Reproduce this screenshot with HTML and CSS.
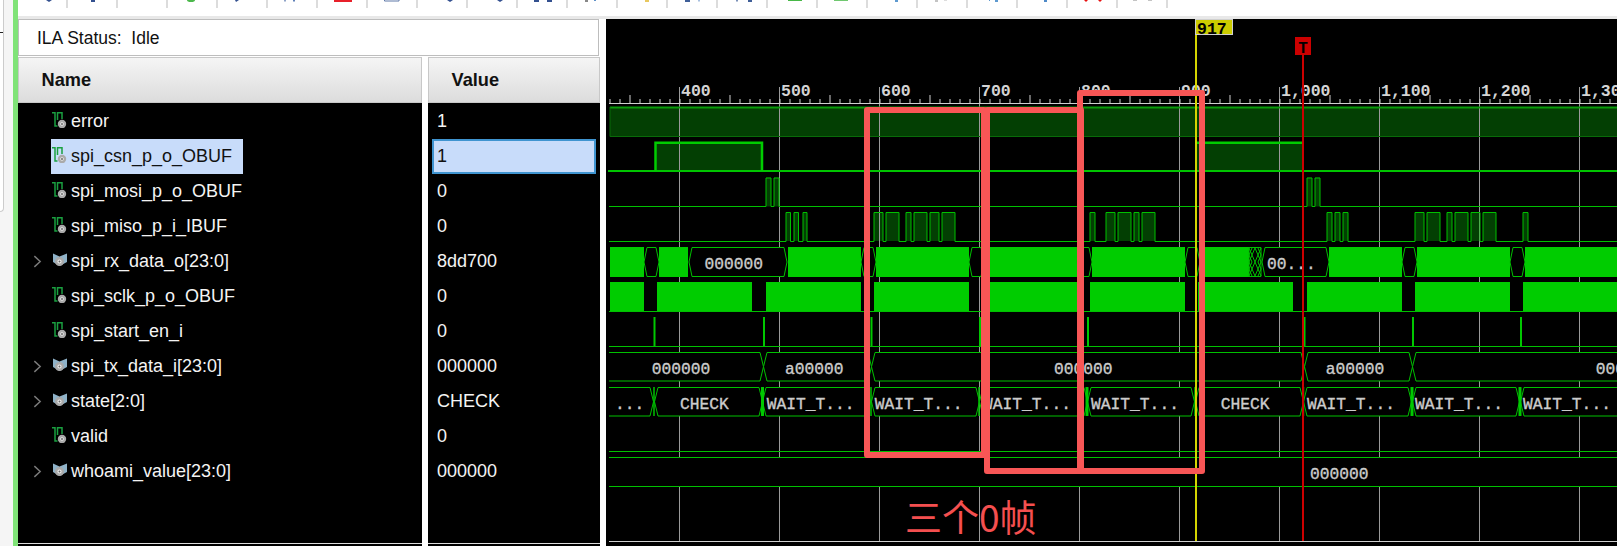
FILE: index.html
```html
<!DOCTYPE html>
<html lang="en">
<head>
<meta charset="utf-8">
<title>ILA Waveform</title>
<link rel="stylesheet" href="styles.css">
</head>
<body>
<svg class="defs" width="0" height="0" aria-hidden="true">
  <defs>
    <symbol id="ic-bit" viewBox="0 0 16 16">
      <path d="M0 0.800H3V14H5.500M5.500 8V0.800H10V7" fill="none" stroke="#1aa040" stroke-width="1.500"/>
      <circle cx="10" cy="12" r="3" fill="#f0f0f0" stroke="#aaaaaa" stroke-width="2.400"/>
      <circle cx="10" cy="12" r="1" fill="#6a6a6a"/>
    </symbol>
    <symbol id="ic-bus" viewBox="0 0 16 16">
      <path d="M1 1.500L7.500 4.500L15 1.500V10L7.500 14L1 10Z" fill="#8fb2c8"/>
      <circle cx="7.500" cy="9.500" r="3.300" fill="#f0f0f0" stroke="#aaaaaa" stroke-width="2.400"/>
      <circle cx="7.500" cy="9.500" r="1" fill="#6a6a6a"/>
    </symbol>
    <symbol id="ic-chev" viewBox="0 0 10 14">
      <path d="M1.500 1L8 7L1.500 13" fill="none" stroke="#7a7a7a" stroke-width="1.600"/>
    </symbol>
    <pattern id="ticks" x="579.500" y="95" width="100" height="8" patternUnits="userSpaceOnUse">
      <path d="M0.500 4V8M10.500 4V8M20.500 4V8M30.500 4V8M40.500 4V8M50.500 0V8M60.500 4V8M70.500 4V8M80.500 4V8M90.500 4V8" stroke="#cfcfcf" fill="none"/>
    </pattern>
  </defs>
</svg>

<div class="app">
  <div class="edge"><div class="sliver"><span class="tick"></span></div></div>
  <div class="green-bar"></div>
  <div class="content">
    <div class="toolbar">
      <div class="tool first"><svg viewBox="0 0 48 3"><path d="M28 0h6l-3 2z" fill="#33508f"/></svg></div>
      <div class="tool"><svg viewBox="0 0 48 3"><rect x="23" width="4" height="2" fill="#33508f"/></svg></div>
      <div class="tool"></div>
      <div class="tool"><svg viewBox="0 0 48 3"><path d="M19 0h8a4 2 0 0 1-8 0z" fill="#4cb84c"/></svg></div>
      <div class="tool"><svg viewBox="0 0 48 3"><path d="M17 0h4l-3 2z" fill="#33508f"/></svg></div>
      <div class="tool"><svg viewBox="0 0 48 3"><rect x="16" width="2" height="1.500" fill="#8fa3c8"/><rect x="25" width="2" height="1.500" fill="#5f80b8"/></svg></div>
      <div class="tool"><svg viewBox="0 0 48 3"><rect x="16" width="18" height="2" fill="#e8202a"/></svg></div>
      <div class="tool"><svg viewBox="0 0 48 3"><path d="M16.500 0V1H31V0" fill="none" stroke="#5f78a8"/></svg></div>
      <div class="tool"><svg viewBox="0 0 48 3"><path d="M29 0h6l-3 2z" fill="#33508f"/></svg></div>
      <div class="tool"><svg viewBox="0 0 48 3"><path d="M29 0h6l-3 2z" fill="#33508f"/></svg></div>
      <div class="tool"><svg viewBox="0 0 48 3"><rect x="16" width="5" height="2" fill="#33508f"/><rect x="29" width="5" height="2" fill="#33508f"/></svg></div>
      <div class="tool"><svg viewBox="0 0 48 3"><rect x="17" width="3" height="2" fill="#888"/><rect x="26" width="2" height="1" fill="#5f90c8"/></svg></div>
      <div class="tool"><svg viewBox="0 0 48 3"><rect x="27" width="4" height="2" fill="#e8c860"/></svg></div>
      <div class="tool"><svg viewBox="0 0 48 3"><rect x="17" width="5" height="2" fill="#3f5f98"/><rect x="30" width="2" height="1.500" fill="#a8c0e0"/></svg></div>
      <div class="tool"><svg viewBox="0 0 48 3"><rect x="18" width="2" height="1.500" fill="#7a90b8"/><rect x="30" width="4" height="2" fill="#3f5f98"/></svg></div>
      <div class="tool"><svg viewBox="0 0 48 3"><rect x="20" width="14" height="1" fill="#48b848"/></svg></div>
      <div class="tool"><svg viewBox="0 0 48 3"><rect x="16" width="14" height="1" fill="#70c870"/></svg></div>
      <div class="tool"><svg viewBox="0 0 48 3"><rect x="27" width="3" height="2" fill="#5f9ad0"/></svg></div>
      <div class="tool"><svg viewBox="0 0 48 3"><rect x="17" width="3" height="2" fill="#c4c4c4"/><rect x="26" width="3" height="1" fill="#ddd"/></svg></div>
      <div class="tool"><svg viewBox="0 0 48 3"><rect x="21" width="1" height="1" fill="#5f9ad0"/><rect x="27" width="3" height="2" fill="#5f9ad0"/></svg></div>
      <div class="tool"><svg viewBox="0 0 48 3"><rect x="26" width="3" height="2" fill="#4f8ac8"/></svg></div>
      <div class="tool"><svg viewBox="0 0 48 3"><path d="M16 0h4l-2 2zM30 0h4l-2 2z" fill="#e81010"/></svg></div>
      <div class="tool"><svg viewBox="0 0 48 3"><rect x="15" width="4" height="1" fill="#c4c4c4"/><rect x="30" width="4" height="1" fill="#c4c4c4"/></svg></div>
    </div>
    <div class="strip"></div>
    <div class="workspace">
      <div class="signals">
        <div class="status">ILA Status:&nbsp; Idle</div>
        <div class="table">
          <div class="col col-name">
            <div class="head">Name</div>
            <div class="list">
              <div class="row"><span class="slot"></span><span class="sig"><svg class="ic"><use href="#ic-bit"/></svg>error</span></div>
              <div class="row"><span class="slot"></span><span class="sig sel"><svg class="ic"><use href="#ic-bit"/></svg>spi_csn_p_o_OBUF</span></div>
              <div class="row"><span class="slot"></span><span class="sig"><svg class="ic"><use href="#ic-bit"/></svg>spi_mosi_p_o_OBUF</span></div>
              <div class="row"><span class="slot"></span><span class="sig"><svg class="ic"><use href="#ic-bit"/></svg>spi_miso_p_i_IBUF</span></div>
              <div class="row"><span class="slot"><svg class="chev"><use href="#ic-chev"/></svg></span><span class="sig"><svg class="ic"><use href="#ic-bus"/></svg>spi_rx_data_o[23:0]</span></div>
              <div class="row"><span class="slot"></span><span class="sig"><svg class="ic"><use href="#ic-bit"/></svg>spi_sclk_p_o_OBUF</span></div>
              <div class="row"><span class="slot"></span><span class="sig"><svg class="ic"><use href="#ic-bit"/></svg>spi_start_en_i</span></div>
              <div class="row"><span class="slot"><svg class="chev"><use href="#ic-chev"/></svg></span><span class="sig"><svg class="ic"><use href="#ic-bus"/></svg>spi_tx_data_i[23:0]</span></div>
              <div class="row"><span class="slot"><svg class="chev"><use href="#ic-chev"/></svg></span><span class="sig"><svg class="ic"><use href="#ic-bus"/></svg>state[2:0]</span></div>
              <div class="row"><span class="slot"></span><span class="sig"><svg class="ic"><use href="#ic-bit"/></svg>valid</span></div>
              <div class="row"><span class="slot"><svg class="chev"><use href="#ic-chev"/></svg></span><span class="sig"><svg class="ic"><use href="#ic-bus"/></svg>whoami_value[23:0]</span></div>
            </div>
          </div>
          <div class="col col-value">
            <div class="head">Value</div>
            <div class="list">
              <div class="val">1</div>
              <div class="val sel">1</div>
              <div class="val">0</div>
              <div class="val">0</div>
              <div class="val">8dd700</div>
              <div class="val">0</div>
              <div class="val">0</div>
              <div class="val">000000</div>
              <div class="val">CHECK</div>
              <div class="val">0</div>
              <div class="val">000000</div>
            </div>
          </div>
        </div>
      </div>

      <svg class="wave" viewBox="606 19 1011 527" width="1011" height="527">
        <!-- low-contrast fills sit under the grid -->
        <g class="fill-dark">
          <rect x="610" y="107" width="1010" height="29.500"/>
          <rect x="655" y="142" width="107" height="29"/>
          <rect x="1197" y="142" width="105" height="29"/>
          <path d="M766 177.500h5v29h-5zM774 177.500h5v29h-5zM1307 177.500h5v29h-5zM1315 177.500h5v29h-5z"/>
          <path d="M786 212h4.500v29h-4.500zM794 212h4.500v29h-4.500zM803 212h4v29h-4zM874 212h9v29h-9zM886 212h13v29h-13zM906 212h5v29h-5zM914 212h13v29h-13zM930 212h9v29h-9zM942 212h13v29h-13zM1090 212h5v29h-5zM1106 212h9v29h-9zM1118 212h13v29h-13zM1134 212h5v29h-5zM1142 212h13v29h-13zM1327 212h5v29h-5zM1335 212h5v29h-5zM1343 212h5v29h-5zM1415 212h9v29h-9zM1427 212h13v29h-13zM1447 212h5v29h-5zM1455 212h13v29h-13zM1471 212h9v29h-9zM1483 212h13v29h-13zM1523 212h5v29h-5z"/>
        </g>

        <path class="grid" d="M679.500 87V541M779.500 87V541M879.500 87V541M979.500 87V541M1079.500 87V541M1179.500 87V541M1279.500 87V541M1379.500 87V541M1479.500 87V541M1579.500 87V541"/>

        <!-- ruler -->
        <rect x="609" y="95" width="1008" height="8" fill="url(#ticks)"/>
        <path class="ruler" d="M609 103.500H1617M609 541.500H1617"/>
        <g class="ruler-label">
          <text x="681" y="96">400</text><text x="781" y="96">500</text><text x="881" y="96">600</text><text x="981" y="96">700</text><text x="1081" y="96">800</text><text x="1181" y="96">900</text><text x="1281" y="96">1,000</text><text x="1381" y="96">1,100</text><text x="1481" y="96">1,200</text><text x="1581" y="96">1,300</text>
        </g>

        <!-- error -->
        <path class="edge-top" d="M610 107.500H1617"/>
        <path class="edge-low" d="M610 107V136.500H1617"/>

        <!-- single-bit rows -->
        <path class="low2" d="M608 171H1617"/>
        <path class="hi2" d="M655.500 171V142.800H762V171M1197 142.800H1302"/>
        <path class="bit" d="M609 206.500H766V178H771V206.500H774V178H779V206.500H1307V178H1312V206.500H1315V178H1320V206.500H1617"/>
        <path class="bit" d="M609 241.500H786V212.500H790.500V241.500H794V212.500H798.500V241.500H803V212.500H807V241.500H874V212.500H883V241.500H886V212.500H899V241.500H906V212.500H911V241.500H914V212.500H927V241.500H930V212.500H939V241.500H942V212.500H955V241.500H1090V212.500H1095V241.500H1106V212.500H1115V241.500H1118V212.500H1131V241.500H1134V212.500H1139V241.500H1142V212.500H1155V241.500H1327V212.500H1332V241.500H1335V212.500H1340V241.500H1343V212.500H1348V241.500H1415V212.500H1424V241.500H1427V212.500H1440V241.500H1447V212.500H1452V241.500H1455V212.500H1468V241.500H1471V212.500H1480V241.500H1483V212.500H1496V241.500H1523V212.500H1528V241.500H1617"/>

        <!-- spi_rx_data_o -->
        <g class="solid">
          <rect x="610" y="247" width="34" height="30"/><rect x="659" y="247" width="29" height="30"/><rect x="788" y="247" width="73" height="30"/><rect x="876" y="247" width="93" height="30"/><rect x="984" y="247" width="93" height="30"/><rect x="1092" y="247" width="93" height="30"/><rect x="1200" y="247" width="49" height="30"/><rect x="1329" y="247" width="73" height="30"/><rect x="1417" y="247" width="93" height="30"/><rect x="1525" y="247" width="92" height="30"/>
        </g>
        <g class="bus">
          <path d="M647 247.500h9l3 14.500-3 14.500h-9l-3-14.500z"/>
          <path d="M692 247.500h92l3 14.500-3 14.500h-92l-3-14.500z"/>
          <path d="M864 247.500h9l3 14.500-3 14.500h-9l-3-14.500z"/>
          <path d="M972 247.500h9l3 14.500-3 14.500h-9l-3-14.500z"/>
          <path d="M1080 247.500h9l3 14.500-3 14.500h-9l-3-14.500z"/>
          <path d="M1188 247.500h9l3 14.500-3 14.500h-9l-3-14.500z"/>
          <path d="M1265 247.500h61l3 14.500-3 14.500h-61l-3-14.500z"/>
          <path d="M1405 247.500h9l3 14.500-3 14.500h-9l-3-14.500z"/>
          <path d="M1513 247.500h9l3 14.500-3 14.500h-9l-3-14.500z"/>
          <path d="M1249 247.500h12v29h-12z"/>
        </g>
        <path class="bit" d="M1249 248l3 7-3 7 3 7-3 7M1252 248l-3 7 3 7-3 7 3 7M1255 248l-3 7 3 7-3 7 3 7M1255 248l3 7-3 7 3 7-3 7M1258 248l3 7-3 7 3 7-3 7M1261 248l-3 7 3 7-3 7 3 7"/>

        <!-- spi_sclk_p_o_OBUF -->
        <g class="solid">
          <rect x="610" y="282" width="34" height="29.500"/><rect x="657" y="282" width="95" height="29.500"/><rect x="766" y="282" width="95" height="29.500"/><rect x="874" y="282" width="95" height="29.500"/><rect x="982" y="282" width="95" height="29.500"/><rect x="1090" y="282" width="95" height="29.500"/><rect x="1198" y="282" width="95" height="29.500"/><rect x="1307" y="282" width="95" height="29.500"/><rect x="1415" y="282" width="95" height="29.500"/><rect x="1523" y="282" width="94" height="29.500"/>
        </g>
        <path class="bit" d="M609 311.500H1617"/>

        <!-- spi_start_en_i -->
        <path class="bit" d="M609 346.500H1617"/>
        <path class="pulse" d="M654.500 317V346M764 317V346M871.500 317V346M980 317V346M1088 317V346M1304.500 317V346M1413 317V346M1521 317V346"/>

        <!-- spi_tx_data_i -->
        <g class="bus">
          <path d="M609 352.500H760l3.500 14.250-3.500 14.250H609"/>
          <path d="M767 352.500H868l3.500 14.250-3.500 14.250H767l-3.500-14.250z"/>
          <path d="M875 352.500H1301l3.500 14.250-3.500 14.250H875l-3.500-14.250z"/>
          <path d="M1308 352.500H1409l3.500 14.250-3.500 14.250H1308l-3.500-14.250z"/>
          <path d="M1617 352.500H1416l-3.500 14.250 3.500 14.250H1617"/>
        </g>

        <!-- state -->
        <g class="bus">
          <path d="M609 387.500H650l3.500 14.250-3.500 14.250H609"/>
          <path d="M658 387.500H759l3.500 14.250-3.500 14.250H658l-3.500-14.250z"/>
          <path d="M766 387.500H867l3.500 14.250-3.500 14.250H766l-3.500-14.250z"/>
          <path d="M875 387.500H976l3.500 14.250-3.500 14.250H875l-3.500-14.250z"/>
          <path d="M983 387.500H1084l3.500 14.250-3.500 14.250H983l-3.500-14.250z"/>
          <path d="M1091 387.500H1191l3.500 14.250-3.500 14.250H1091l-3.500-14.250z"/>
          <path d="M1199 387.500H1300l3.500 14.250-3.500 14.250H1199l-3.500-14.250z"/>
          <path d="M1307 387.500H1408l3.500 14.250-3.500 14.250H1307l-3.500-14.250z"/>
          <path d="M1416 387.500H1516l3.500 14.250-3.500 14.250H1416l-3.500-14.250z"/>
          <path d="M1617 387.500H1524l-3.500 14.250 3.500 14.250H1617"/>
        </g>
        <path class="pulse-pair" d="M654 387V416M871 387V416M979 387V416M1195 387V416M1303.500 387V416"/>
        <path class="pulse-wide" d="M762.500 387V416M1087 387V416M1412 387V416M1520 387V416"/>

        <!-- valid -->
        <path class="bit" d="M609 451.500H1617"/>

        <!-- whoami_value -->
        <rect class="blank" x="609" y="457.500" width="1008" height="29"/>
        <path class="bit" d="M609 457.500H1617M609 486.500H1617"/>

        <g class="bus-label">
          <text x="704.500" y="269">000000</text>
          <text x="1267" y="269">00...</text>
          <text x="651.700" y="374">000000</text>
          <text x="785" y="374">a00000</text>
          <text x="1054" y="374">000000</text>
          <text x="1325.700" y="374">a00000</text>
          <text x="1595.700" y="374">000000</text>
          <text x="615" y="409">...</text>
          <text x="680" y="409">CHECK</text>
          <text x="766.700" y="409">WAIT_T...</text>
          <text x="874.700" y="409">WAIT_T...</text>
          <text x="983" y="409">WAIT_T...</text>
          <text x="1091" y="409">WAIT_T...</text>
          <text x="1220.700" y="409">CHECK</text>
          <text x="1307" y="409">WAIT_T...</text>
          <text x="1415" y="409">WAIT_T...</text>
          <text x="1523" y="409">WAIT_T...</text>
          <text x="1310" y="479">000000</text>
        </g>

        <!-- cursor and trigger -->
        <path class="cursor" d="M1196 35V541"/>
        <rect class="cursor-flag" x="1195.500" y="19.500" width="37" height="15"/>
        <text class="cursor-text" x="1197" y="33.500">917</text>
        <path class="trigger" d="M1303 55V541"/>
        <rect class="trigger-flag" x="1295" y="37" width="16" height="18"/>
        <text class="trigger-text" x="1303" y="52.500">T</text>

        <!-- hand-drawn annotation -->
        <g class="mark">
          <rect x="867" y="110" width="117" height="345"/>
          <rect x="987" y="110" width="94" height="361"/>
          <rect x="1080" y="93" width="122" height="378"/>
        </g>
        <text class="mark-text" x="905" y="532">三个0帧</text>
      </svg>
    </div>
  </div>
</div>
</body>
</html>
```
FILE: styles.css
```css
* { box-sizing: border-box; }

html, body {
  margin: 0;
  padding: 0;
  background: #fff;
  overflow: hidden;
}

.defs { position: absolute; }

.app {
  display: flex;
  width: 1617px;
  height: 546px;
  overflow: hidden;
  font-family: "Liberation Sans", Arial, sans-serif;
}

/* left window edge */
.edge {
  width: 13px;
  background: #f5f5f5;
  flex: none;
}
.sliver {
  position: relative;
  width: 4px;
  height: 212px;
  background: #fff;
  border-right: 1px solid #ccc;
  border-bottom: 1px solid #ccc;
  border-bottom-right-radius: 4px;
}
.tick {
  position: absolute;
  top: 32px;
  left: 0;
  width: 3px;
  height: 1px;
  background: #222;
}
.green-bar {
  width: 5px;
  background: #80e378;
  flex: none;
}

.content {
  flex: 1;
  display: flex;
  flex-direction: column;
  min-width: 0;
}

/* toolbar: only the bottom of its icons is in view */
.toolbar {
  display: flex;
  height: 16px;
  background: #fff;
  flex: none;
}
.tool {
  width: 50px;
  height: 8px;
  border-right: 2px solid #dcdcdc;
  flex: none;
}
.tool.first { width: 49.500px; }
.tool svg {
  display: block;
  width: 48px;
  height: 3px;
}
.strip {
  height: 3px;
  background: #e8e8e8;
  flex: none;
}

.workspace {
  flex: 1;
  display: flex;
  min-height: 0;
}

/* signal table */
.signals {
  width: 588px;
  flex: none;
  display: flex;
  flex-direction: column;
  background: #fff;
}
.status {
  width: 581px;
  height: 37px;
  flex: none;
  border: 1px solid #bdbdbd;
  background: #fff;
  padding: 2px 0 0 18px;
  font-size: 17.500px;
  line-height: 33px;
  color: #111;
}
.table {
  flex: 1;
  display: flex;
  gap: 6px;
  margin-top: 1px;
  min-height: 0;
}
.col {
  display: flex;
  flex-direction: column;
  background: #000;
  min-height: 0;
}
.col-name { width: 404px; }
.col-value { width: 172px; }

.head {
  height: 46px;
  flex: none;
  background: linear-gradient(#f5f5f5, #dcdcdc);
  border: 1px solid #c8c8c8;
  padding-top: 1px;
  font-size: 18.200px;
  font-weight: bold;
  line-height: 43px;
  color: #111;
}
.col-name .head { padding-left: 22.500px; }
.col-value .head { padding-left: 22.500px; }

.list {
  height: 441px;
  flex: none;
  background: #000;
  border-bottom: 1px solid #ddd;
  padding-top: 0.500px;
}

.row {
  display: flex;
  align-items: stretch;
  height: 35px;
  padding-left: 15px;
  color: #f4f4f4;
  font-size: 18px;
}
.slot {
  width: 18px;
  flex: none;
  display: flex;
  align-items: center;
}
.chev {
  width: 9px;
  height: 13px;
}
.sig {
  display: flex;
  align-items: center;
  padding: 0 11px 0 1px;
  white-space: nowrap;
}
.sig.sel {
  background: #c8dcfa;
  color: #111;
}
.ic {
  width: 16px;
  height: 16px;
  margin: 0 3px 2px 0;
  flex: none;
}

.val {
  height: 35px;
  width: 164px;
  margin-left: 4px;
  padding-left: 3px;
  border: 2px solid transparent;
  color: #f4f4f4;
  font-size: 18px;
  line-height: 31px;
}
.val.sel {
  background: #c8dcfa;
  border-color: #3f94d0;
  color: #111;
}

/* waveform canvas */
.wave {
  flex: none;
  display: block;
  background: #000;
}
.fill-dark { fill: #033f03; }
.grid { stroke: #9a9a9a; stroke-width: 1; fill: none; }
.ruler { stroke: #cfcfcf; stroke-width: 1; fill: none; }
.ruler-label text {
  font-family: "Liberation Mono", monospace;
  font-size: 16.500px;
  font-weight: bold;
  fill: #d4d4d4;
}
.edge-top { stroke: #0a9a0a; stroke-width: 2; fill: none; }
.edge-low { stroke: #096a09; stroke-width: 1; fill: none; }
.low2 { stroke: #00c400; stroke-width: 2; fill: none; }
.hi2 { stroke: #00cc00; stroke-width: 2.500; fill: none; }
.bit { stroke: #00c000; stroke-width: 1; fill: none; }
.pulse { stroke: #00c800; stroke-width: 2; fill: none; }
.pulse-pair { stroke: #00c000; stroke-width: 1.500; fill: none; }
.pulse-wide { stroke: #00c800; stroke-width: 3; fill: none; }
.solid { fill: #00cc00; }
.bus path { stroke: #00c000; stroke-width: 1; fill: #000; }
.blank { fill: #000; }
.bus-label text {
  font-family: "Liberation Mono", monospace;
  font-size: 16.300px;
  fill: #cccccc;
  stroke: #cccccc;
  stroke-width: 0.350;
}
.cursor { stroke: #d4d400; stroke-width: 2; fill: none; }
.cursor-flag { fill: #cccc00; stroke: #d0d0d0; stroke-width: 1; }
.cursor-text {
  font-family: "Liberation Mono", monospace;
  font-size: 16.500px;
  font-weight: bold;
  fill: #000;
}
.trigger { stroke: #cc0000; stroke-width: 2; fill: none; }
.trigger-flag { fill: #cc0000; }
.trigger-text {
  font-family: "Liberation Mono", monospace;
  font-size: 16px;
  font-weight: bold;
  fill: #000;
  text-anchor: middle;
}
.mark rect {
  fill: none;
  stroke: #f85656;
  stroke-width: 6;
  stroke-linejoin: round;
}
.mark-text {
  font-family: "Noto Sans CJK SC", "Liberation Sans", sans-serif;
  font-size: 37px;
  font-weight: 400;
  fill: #f44f4f;
}
```
